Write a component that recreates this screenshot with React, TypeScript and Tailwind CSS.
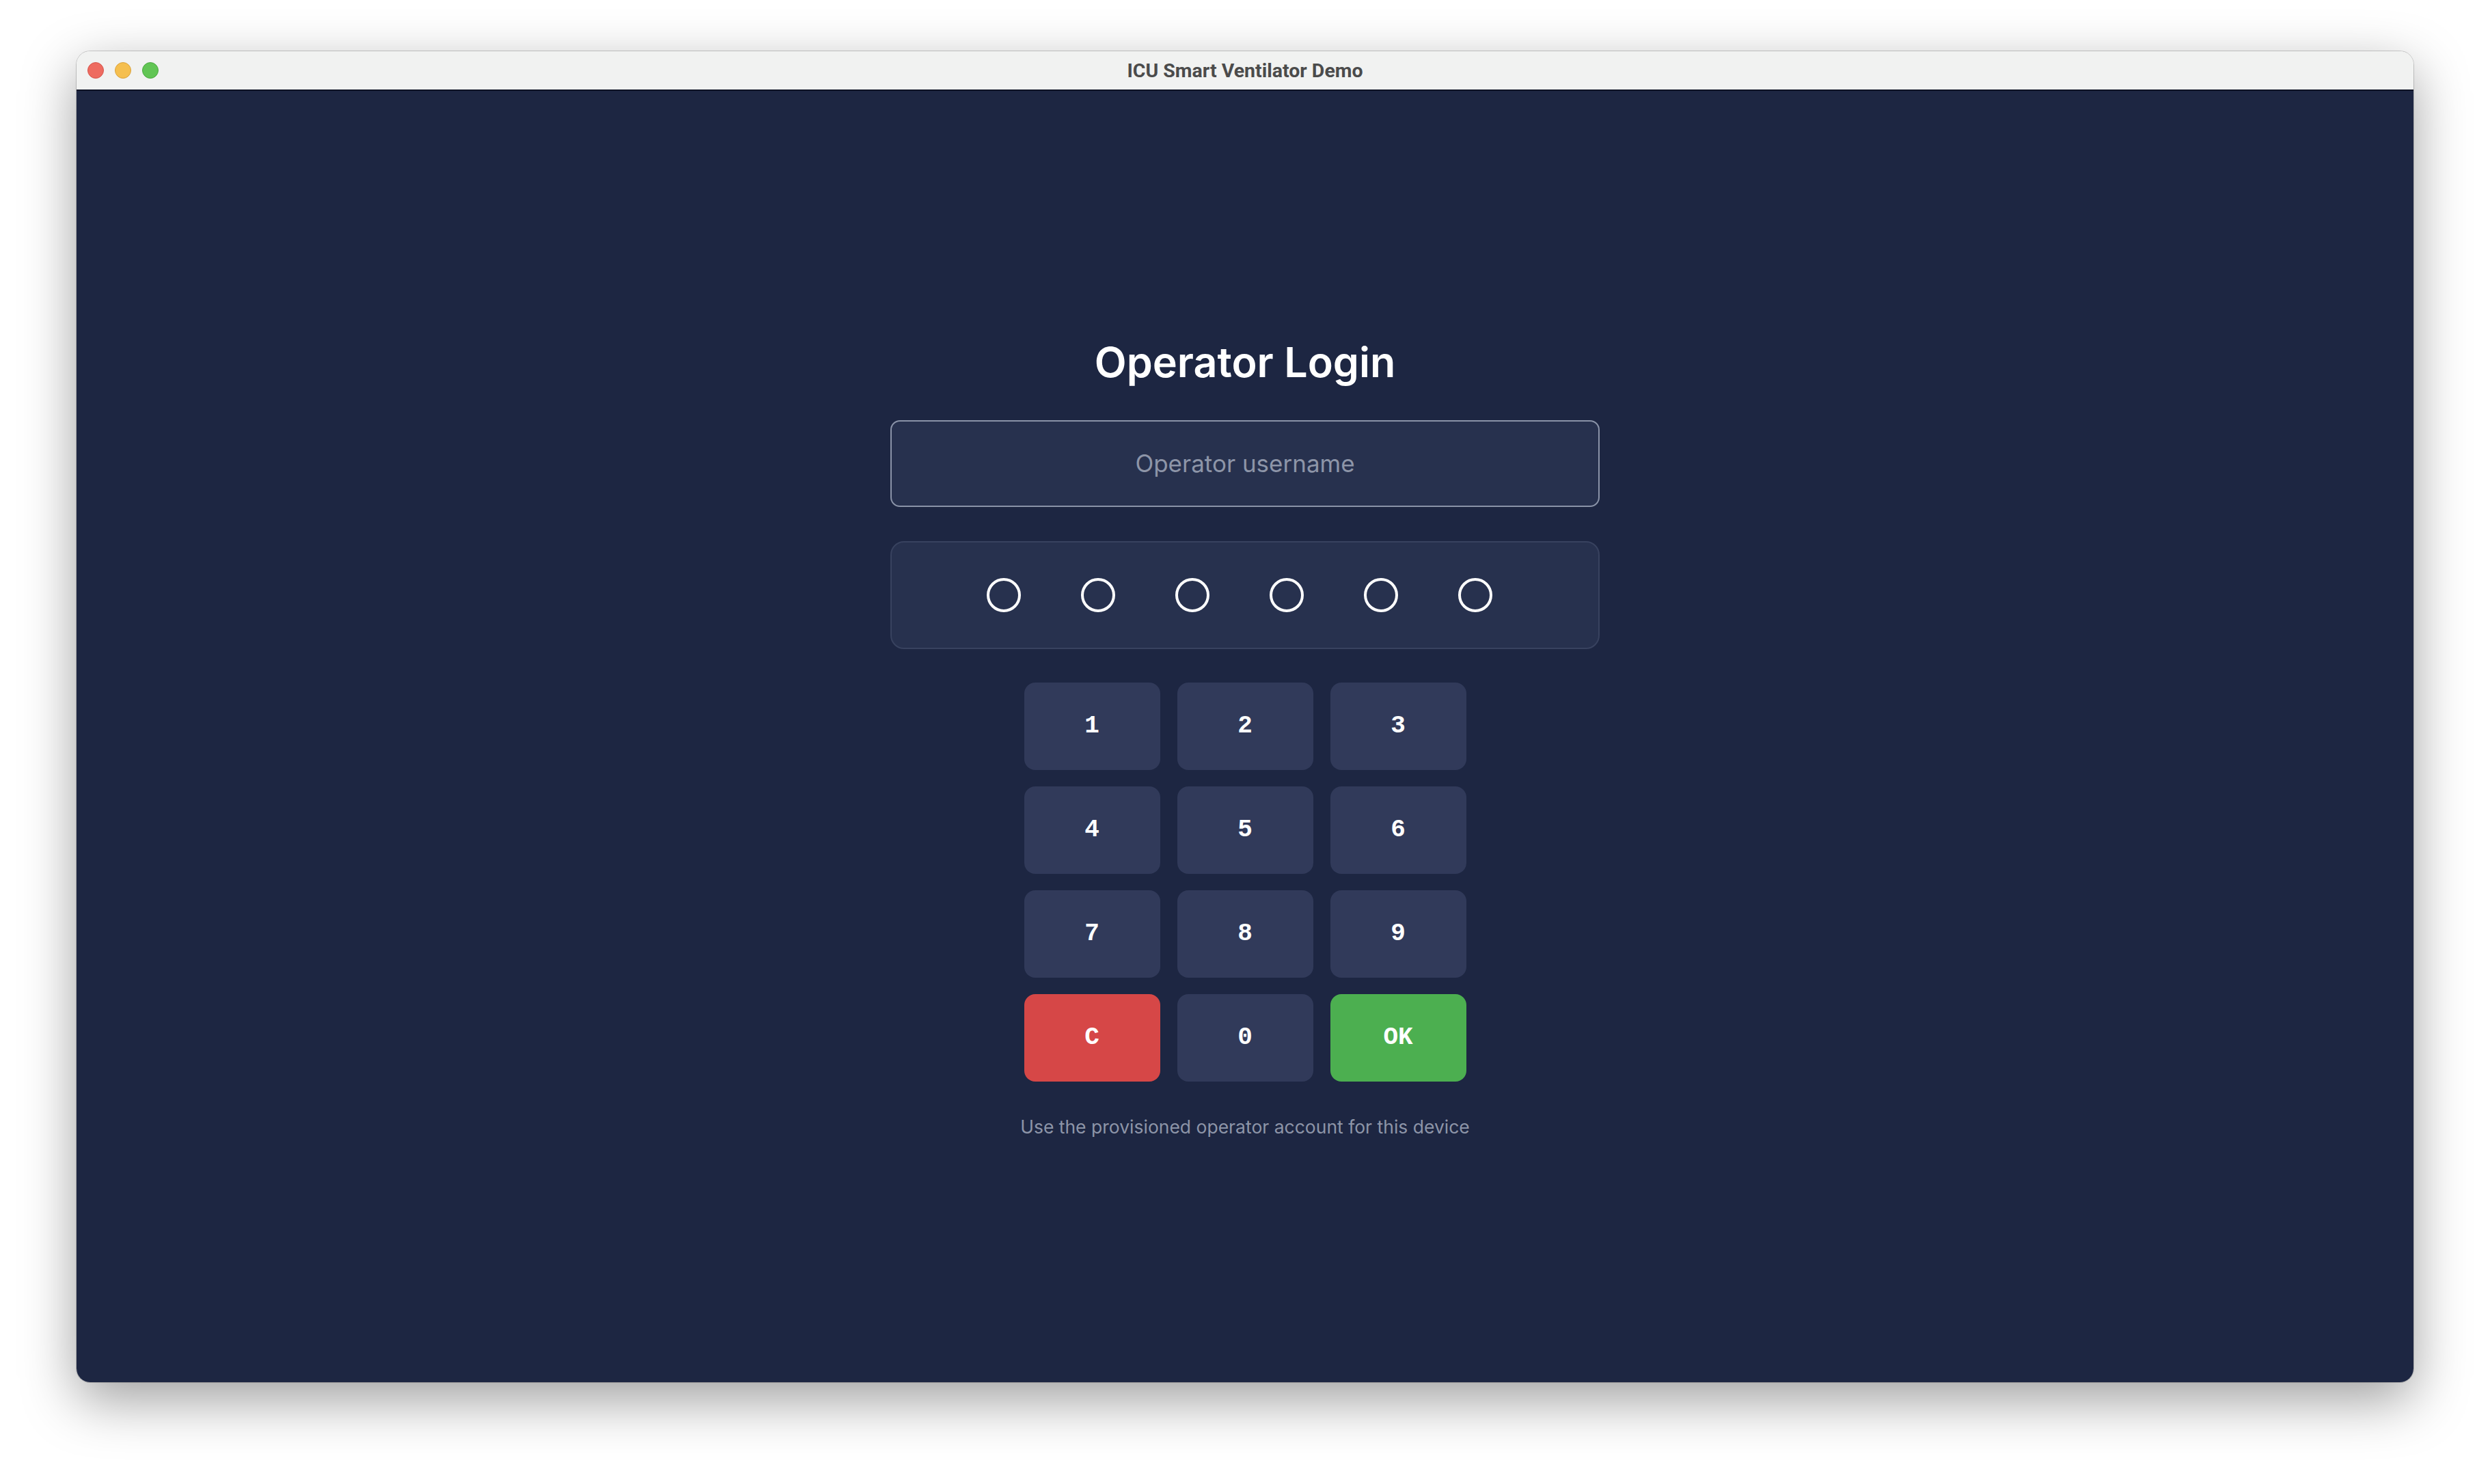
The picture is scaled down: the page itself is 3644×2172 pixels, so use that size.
import React, { useState } from "react";

const KEYS = ["1", "2", "3", "4", "5", "6", "7", "8", "9", "C", "0", "OK"];
const PIN_LENGTH = 6;

const keyClass = (k: string) => {
  if (k === "C") return "bg-[#d64747]";
  if (k === "OK") return "bg-[#4caf50]";
  return "bg-[#313a5a]";
};

const App = () => {
  const [username, setUsername] = useState("");
  const [pin, setPin] = useState("");

  const press = (k: string) => {
    if (k === "C") {
      setPin("");
    } else if (k === "OK") {
      // submit would go here
    } else if (pin.length < PIN_LENGTH) {
      setPin(pin + k);
    }
  };

  return (
    <div className="w-[3644px] h-[2172px] bg-white pt-[75px] px-[112px] pb-[149px] flex">
      {/* window */}
      <div className="flex-1 flex flex-col rounded-[20px] overflow-hidden shadow-[0_0_0_1px_rgba(0,0,0,0.18),0_26px_80px_rgba(0,0,0,0.38)]">
        {/* title bar */}
        <div className="relative h-[58px] shrink-0 bg-[#f1f2f1] border-b-2 border-[#0d1224] flex items-center justify-center">
          <div className="absolute left-[16px] top-0 h-full flex items-center gap-[16px]">
            <span className="w-[24px] h-[24px] rounded-full bg-[#ee6b60] border border-[#d5554b]" />
            <span className="w-[24px] h-[24px] rounded-full bg-[#f5bf4f] border border-[#d9a23c]" />
            <span className="w-[24px] h-[24px] rounded-full bg-[#61c554] border border-[#4aa83f]" />
          </div>
          <span className="pt-[3px] font-['Roboto',sans-serif] font-bold text-[28.5px] text-[#4b4b4b]">
            ICU Smart Ventilator Demo
          </span>
        </div>

        {/* content */}
        <div className="flex-1 bg-[#1d2642] pt-[3px] flex flex-col items-center justify-center font-['Inter',sans-serif]">
          <h1 className="text-[61px] leading-[74px] font-semibold text-white">Operator Login</h1>

          <input
            value={username}
            onChange={(e) => setUsername(e.target.value)}
            placeholder="Operator username"
            className="mt-[48px] w-[1038px] h-[127px] rounded-[14px] border-2 border-[#8a93a8] bg-[#27314e] text-center text-[35px] text-white placeholder:text-[#8d95a8] outline-none"
          />

          <div className="mt-[50px] w-[1038px] h-[158px] rounded-[20px] border-2 border-[#38425f] bg-[#27314e] pr-[16px] flex items-center justify-center gap-[88px]">
            {Array.from({ length: PIN_LENGTH }).map((_, i) => (
              <span
                key={i}
                className={
                  i < pin.length
                    ? "w-[50px] h-[50px] rounded-full border-4 border-white bg-white"
                    : "w-[50px] h-[50px] rounded-full border-4 border-white"
                }
              />
            ))}
          </div>

          <div className="mt-[49px] grid grid-cols-[repeat(3,199px)] auto-rows-[128px] gap-x-[25px] gap-y-[24px]">
            {KEYS.map((k) => (
              <button
                key={k}
                onClick={() => press(k)}
                className={`${keyClass(k)} rounded-[16px] flex items-center justify-center text-white font-bold text-[36px] font-['Liberation_Mono',monospace]`}
              >
                {k}
              </button>
            ))}
          </div>

          <p className="mt-[48px] text-[26.5px] leading-[36px] text-[#8d95a8]">
            Use the provisioned operator account for this device
          </p>
        </div>
      </div>
    </div>
  );
};

export default App;
